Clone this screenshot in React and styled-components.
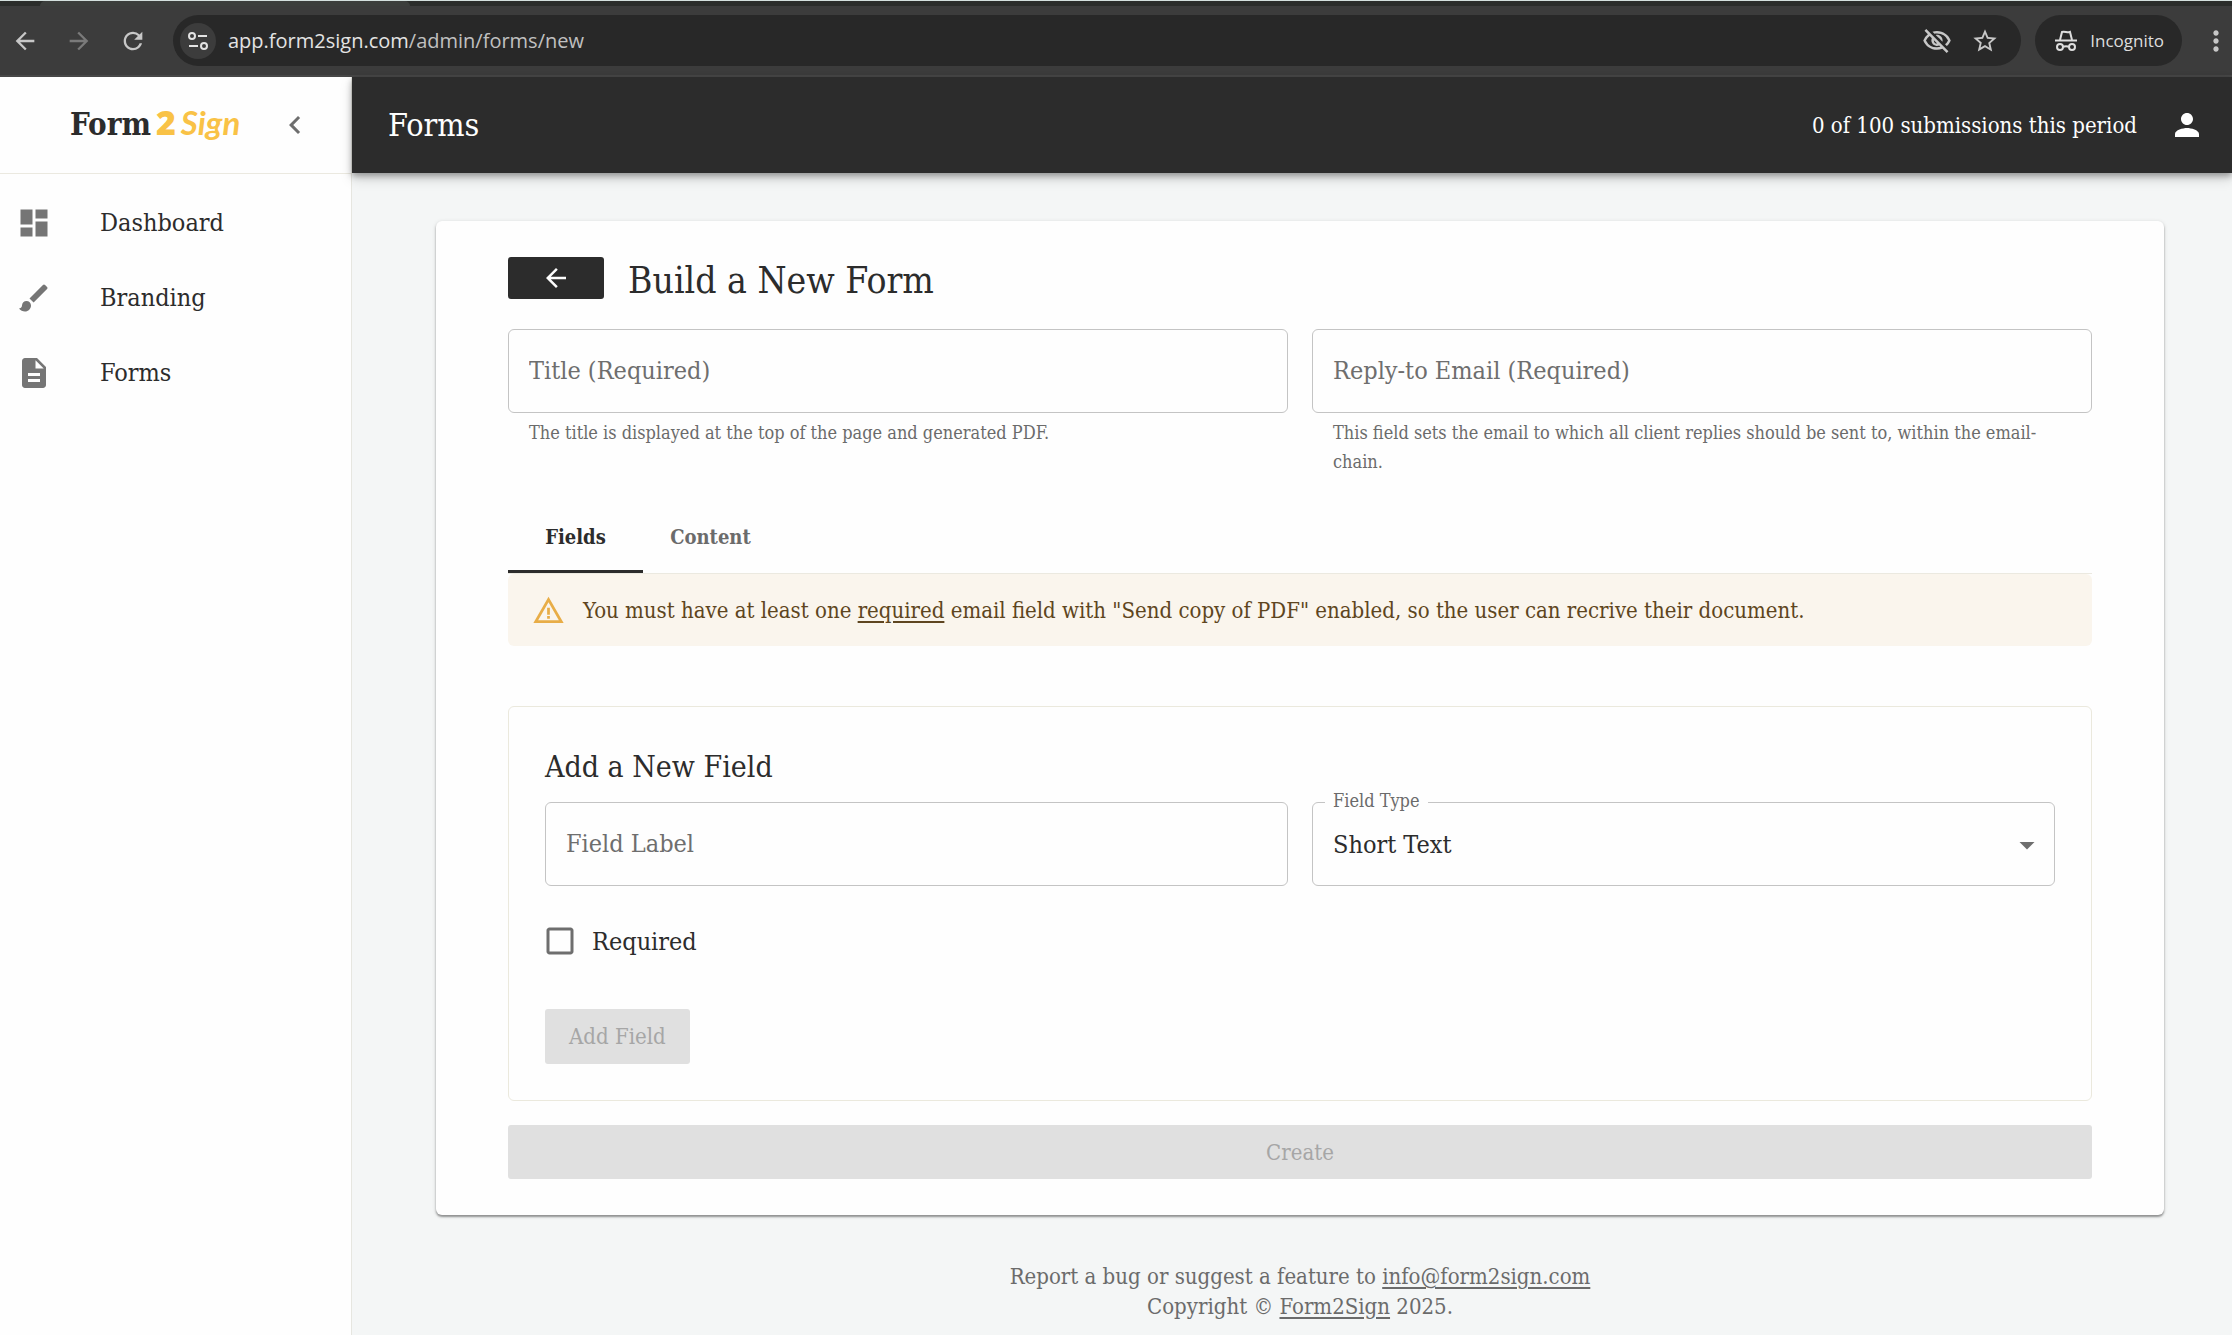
import React, { useState } from "react";
import styled, { createGlobalStyle } from "styled-components";
import {
  MdArrowBack,
  MdArrowDropDown,
  MdArrowForward,
  MdBrush,
  MdCheckBox,
  MdCheckBoxOutlineBlank,
  MdChevronLeft,
  MdDashboard,
  MdDescription,
  MdMoreVert,
  MdOutlineVisibilityOff,
  MdPerson,
  MdRefresh,
  MdStarOutline,
  MdWarningAmber,
} from "react-icons/md";

const menu = [
  { name: "Dashboard", icon: MdDashboard },
  { name: "Branding", icon: MdBrush },
  { name: "Forms", icon: MdDescription },
];

function BrowserBar() {
  return (
    <StBrowser>
      <TabStrip>
        <ActiveTab />
      </TabStrip>
      <Toolbar>
        <ToolButton aria-label="Back">
          <MdArrowBack size={28} />
        </ToolButton>
        <ToolButton aria-label="Forward" $dim>
          <MdArrowForward size={28} />
        </ToolButton>
        <ToolButton aria-label="Reload">
          <MdRefresh size={28} />
        </ToolButton>
        <AddressBar>
          <SiteInfo aria-label="Site information">
            <svg width="22" height="22" viewBox="0 0 22 22" fill="none" stroke="currentColor" strokeWidth="2">
              <circle cx="5" cy="6" r="3" />
              <path d="M11 6h9M2 16h9" />
              <circle cx="17" cy="16" r="3" />
            </svg>
          </SiteInfo>
          <Url>
            app.form2sign.com<span>/admin/forms/new</span>
          </Url>
          <AddressButton aria-label="Third-party cookies blocked">
            <MdOutlineVisibilityOff size={30} />
          </AddressButton>
          <AddressButton aria-label="Bookmark">
            <MdStarOutline size={28} />
          </AddressButton>
        </AddressBar>
        <Incognito>
          <svg width="22" height="22" viewBox="0 0 22 22" fill="none" stroke="currentColor" strokeWidth="2">
            <path d="M0 10.500h22" />
            <path d="M5 10l2-8c2-1 6 1 8 0l2 8" />
            <circle cx="5" cy="17" r="3" />
            <circle cx="17" cy="17" r="3" />
            <path d="M8 17c1-1 5-1 6 0" />
          </svg>
          Incognito
        </Incognito>
        <MenuButton aria-label="Menu">
          <MdMoreVert size={32} />
        </MenuButton>
      </Toolbar>
    </StBrowser>
  );
}

function SideMenu() {
  return (
    <StSide>
      <LogoRow>
        <Logo href="#">
          Form<Two>2</Two>
          <Sign>Sign</Sign>
        </Logo>
        <CollapseButton aria-label="Collapse menu">
          <MdChevronLeft size={36} />
        </CollapseButton>
      </LogoRow>
      <MenuList>
        {menu.map(({ name, icon: Icon }) => (
          <MenuItem key={name} href="#">
            <Icon size={36} />
            {name}
          </MenuItem>
        ))}
      </MenuList>
    </StSide>
  );
}

function TextField({ label, helper }) {
  return (
    <Field>
      <Input type="text" placeholder={label} aria-label={label} />
      {helper && <Helper>{helper}</Helper>}
    </Field>
  );
}

function NewField() {
  const [required, setRequired] = useState(false);
  return (
    <FieldBox>
      <SubTitle>Add a New Field</SubTitle>
      <Columns>
        <TextField label="Field Label" />
        <SelectField>
          <SelectLabel htmlFor="fieldType">Field Type</SelectLabel>
          <Select id="fieldType" defaultValue="Short Text">
            <option>Short Text</option>
            <option>Long Text</option>
            <option>Email</option>
          </Select>
          <MdArrowDropDown size={36} />
        </SelectField>
      </Columns>
      <CheckLabel>
        <input
          type="checkbox"
          checked={required}
          onChange={(e) => setRequired(e.target.checked)}
        />
        {required ? <MdCheckBox size={36} /> : <MdCheckBoxOutlineBlank size={36} />}
        Required
      </CheckLabel>
      <DisabledButton disabled>Add Field</DisabledButton>
    </FieldBox>
  );
}

function App() {
  return (
    <>
      <GlobalStyle />
      <Page>
        <BrowserBar />
        <Body>
          <SideMenu />
          <Content>
            <Header>
              <HeaderTitle>Forms</HeaderTitle>
              <Usage>0 of 100 submissions this period</Usage>
              <AccountButton aria-label="Account">
                <MdPerson size={36} />
              </AccountButton>
            </Header>
            <Main>
              <Card>
                <TitleRow>
                  <BackButton aria-label="Back to forms">
                    <MdArrowBack size={30} />
                  </BackButton>
                  <Title>Build a New Form</Title>
                </TitleRow>
                <Columns>
                  <TextField
                    label="Title (Required)"
                    helper="The title is displayed at the top of the page and generated PDF."
                  />
                  <TextField
                    label="Reply-to Email (Required)"
                    helper="This field sets the email to which all client replies should be sent to, within the email-chain."
                  />
                </Columns>
                <Tabs role="tablist">
                  <Tab role="tab" aria-selected="true" $active>
                    Fields
                  </Tab>
                  <Tab role="tab" aria-selected="false">
                    Content
                  </Tab>
                </Tabs>
                <Alert role="alert">
                  <MdWarningAmber size={33} />
                  <p>
                    You must have at least one <u>required</u> email field with "Send copy of PDF"
                    enabled, so the user can recrive their document.
                  </p>
                </Alert>
                <NewField />
                <DisabledButton disabled $full>
                  Create
                </DisabledButton>
              </Card>
              <Footer>
                <p>
                  Report a bug or suggest a feature to{" "}
                  <a href="mailto:info@form2sign.com">info@form2sign.com</a>
                </p>
                <p>
                  Copyright © <a href="#">Form2Sign</a> 2025.
                </p>
              </Footer>
            </Main>
          </Content>
        </Body>
      </Page>
    </>
  );
}

export default App;

const GlobalStyle = createGlobalStyle`
  * {
    box-sizing: border-box;
  }
  body {
    margin: 0;
    font-family: "DejaVu Serif Condensed", "DejaVu Serif", serif;
    color: #2c2c2c;
    background-color: #f4f6f6;
  }
  button, input, select {
    font-family: inherit;
  }
  button {
    border: 0;
    padding: 0;
    background: none;
    color: inherit;
  }
  h1, h2, p {
    margin: 0;
    font-weight: normal;
  }
  svg {
    flex-shrink: 0;
  }
`;

const Page = styled.div`
  min-height: 100vh;
  display: flex;
  flex-direction: column;
`;

const StBrowser = styled.div`
  font-family: "Open Sans", "Noto Sans", sans-serif;
  color: #c7c7c7;
  background-color: #3c3c3c;
  border-top: 1px solid #d5e0de;
  border-bottom: 2px solid #474747;
`;

const TabStrip = styled.div`
  height: 5px;
  padding-left: 40px;
  background-color: #2b2d2b;
`;

const ActiveTab = styled.div`
  width: 370px;
  height: 5px;
  border-radius: 5px 5px 0 0;
  background-color: #3c3e3c;
`;

const Toolbar = styled.div`
  height: 69px;
  display: flex;
  align-items: center;
  padding: 0 0 0 11px;
`;

const ToolButton = styled.button`
  width: 28px;
  height: 28px;
  margin-right: 26px;
  color: ${(props) => (props.$dim ? "#7a7a7a" : "#c7c7c7")};
`;

const AddressBar = styled.div`
  flex: 1;
  height: 51px;
  display: flex;
  align-items: center;
  gap: 12px;
  padding: 0 22px 0 7px;
  border-radius: 26px;
  background-color: #282828;
`;

const SiteInfo = styled.button`
  width: 36px;
  height: 36px;
  display: flex;
  align-items: center;
  justify-content: center;
  border-radius: 50%;
  background-color: #3c3c3c;
  color: #e3e3e3;
`;

const Url = styled.div`
  flex: 1;
  font-size: 20px;
  color: #e3e3e3;
  span {
    color: #c0c0c0;
  }
`;

const AddressButton = styled.button`
  height: 30px;
  display: flex;
  align-items: center;
  margin-left: 7px;
`;

const Incognito = styled.button`
  height: 51px;
  display: flex;
  align-items: center;
  gap: 13px;
  margin-left: 14px;
  padding: 0 18px 0 20px;
  border-radius: 26px;
  font-size: 17px;
  color: #dedede;
  background-color: #282828;
`;

const MenuButton = styled.button`
  height: 32px;
  margin-left: 18px;
`;

const Body = styled.div`
  flex: 1;
  display: flex;
`;

const StSide = styled.nav`
  width: 352px;
  flex-shrink: 0;
  border-right: 1px solid #e6e6e0;
  background-color: #fefefe;
`;

const LogoRow = styled.div`
  height: 97px;
  display: flex;
  align-items: center;
  justify-content: space-between;
  padding: 0 38px 0 70px;
  border-bottom: 1px solid #ebe9e0;
`;

const Logo = styled.a`
  display: flex;
  align-items: baseline;
  padding-bottom: 4px;
  font-size: 31px;
  font-weight: bold;
  line-height: 40px;
  color: #2c2c2c;
  text-decoration: none;
`;

const Two = styled.span`
  margin: 0 5px;
  font-family: "Open Sans", sans-serif;
  font-size: 34px;
  font-weight: 800;
  color: #f9c246;
`;

const Sign = styled.span`
  font-family: Lato, cursive;
  font-size: 33px;
  font-style: italic;
  color: #f9c246;
`;

const CollapseButton = styled.button`
  height: 36px;
  color: #6e6e6e;
`;

const MenuList = styled.div`
  display: flex;
  flex-direction: column;
  padding: 11px 0;
`;

const MenuItem = styled.a`
  height: 75px;
  display: flex;
  align-items: center;
  gap: 48px;
  padding: 0 16px;
  font-size: 25px;
  color: #2c2c2c;
  text-decoration: none;
  svg {
    color: #757575;
  }
`;

const Content = styled.div`
  flex: 1;
  min-width: 0;
`;

const Header = styled.header`
  height: 96px;
  display: flex;
  align-items: center;
  padding: 0 27px 0 36px;
  color: #fefefe;
  background-color: #2c2c2c;
  box-shadow: 0 3px 6px rgba(0, 0, 0, 0.3), 0 6px 12px rgba(0, 0, 0, 0.15);
`;

const HeaderTitle = styled.h1`
  flex: 1;
  font-size: 32px;
`;

const Usage = styled.p`
  font-size: 22px;
`;

const AccountButton = styled.button`
  height: 36px;
  margin-left: 32px;
`;

const Main = styled.main`
  padding: 48px 68px 0 84px;
`;

const Card = styled.section`
  padding: 36px 72px;
  border-radius: 6px;
  background-color: #fefefe;
  box-shadow: 0 2px 2px rgba(0, 0, 0, 0.35), 0 1px 4px rgba(0, 0, 0, 0.15);
`;

const TitleRow = styled.div`
  display: flex;
  align-items: flex-start;
  gap: 24px;
  margin-bottom: 24px;
`;

const BackButton = styled.button`
  width: 96px;
  height: 42px;
  display: flex;
  align-items: center;
  justify-content: center;
  border-radius: 3px;
  color: #fefefe;
  background-color: #2c2c2c;
`;

const Title = styled.h2`
  font-size: 37px;
  line-height: 48px;
`;

const Columns = styled.div`
  display: grid;
  grid-template-columns: 1fr 1fr;
  gap: 24px;
`;

const Field = styled.div`
  min-width: 0;
`;

const Input = styled.input`
  display: block;
  width: 100%;
  height: 84px;
  padding: 0 20px 2px;
  border: 1px solid #c4c4c4;
  border-radius: 6px;
  font-size: 25px;
  color: #2c2c2c;
  background-color: transparent;
  &::placeholder {
    color: #6e6e6e;
    opacity: 1;
  }
`;

const Helper = styled.p`
  margin: 5px 21px 0;
  font-size: 18px;
  line-height: 29px;
  color: #6b6b6b;
`;

const SelectField = styled.div`
  position: relative;
  svg {
    position: absolute;
    top: 25px;
    right: 10px;
    color: #6e6e6e;
    pointer-events: none;
  }
`;

const Select = styled.select`
  appearance: none;
  width: 100%;
  height: 84px;
  padding: 0 20px;
  border: 1px solid #c4c4c4;
  border-radius: 6px;
  font-size: 25px;
  color: #2c2c2c;
  background-color: transparent;
`;

const SelectLabel = styled.label`
  position: absolute;
  top: -14px;
  left: 13px;
  padding: 0 8px;
  font-size: 18px;
  line-height: 26px;
  color: #6b6b6b;
  background-color: #fefefe;
`;

const Tabs = styled.div`
  display: flex;
  margin-top: 25px;
  border-bottom: 1px solid #ebe9e0;
`;

const Tab = styled.button`
  min-width: 135px;
  height: 72px;
  padding: 3px 24px 0;
  font-size: 20px;
  font-weight: bold;
  color: ${(props) => (props.$active ? "#2c2c2c" : "#6b6b6b")};
  border-bottom: 3px solid ${(props) => (props.$active ? "#2c2c2c" : "transparent")};
`;

const Alert = styled.div`
  height: 72px;
  display: flex;
  align-items: center;
  gap: 18px;
  padding: 0 24px;
  border-radius: 6px;
  font-size: 22px;
  color: #5e4520;
  background-color: #faf5ed;
  svg {
    color: #e8ad47;
  }
  u {
    text-underline-offset: 3px;
  }
`;

const FieldBox = styled.section`
  margin: 60px 0 24px;
  padding: 36px;
  border: 1px solid #ebe9dd;
  border-radius: 6px;
`;

const SubTitle = styled.h2`
  margin-bottom: 11px;
  font-size: 30px;
  line-height: 48px;
`;

const CheckLabel = styled.label`
  height: 60px;
  display: flex;
  align-items: center;
  gap: 14px;
  margin: 25px 0 38px -3px;
  font-size: 25px;
  svg {
    color: #6e6e6e;
  }
  input {
    position: absolute;
    opacity: 0;
  }
`;

const DisabledButton = styled.button`
  width: ${(props) => (props.$full ? "100%" : "auto")};
  height: ${(props) => (props.$full ? "54px" : "55px")};
  padding: 0 24px;
  border-radius: 3px;
  font-size: 22px;
  color: #a6a6a6;
  background-color: #e0e0e0;
`;

const Footer = styled.footer`
  padding: 47px 0 3px;
  font-size: 22px;
  line-height: 30px;
  text-align: center;
  color: #6b6b6b;
  a {
    color: inherit;
    text-underline-offset: 3px;
  }
`;
